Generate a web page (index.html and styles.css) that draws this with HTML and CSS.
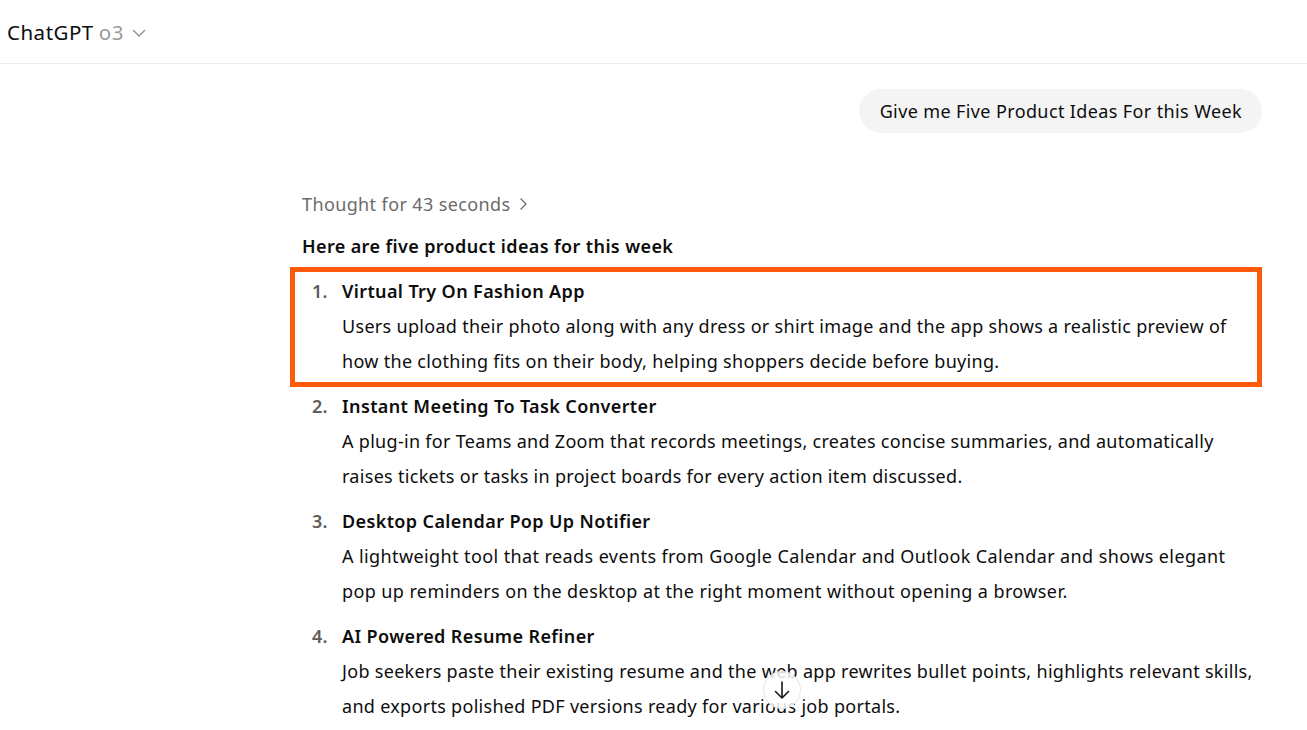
FILE: index.html
```html
<!DOCTYPE html>
<html lang="en">
<head>
<meta charset="utf-8">
<title>ChatGPT</title>
<link rel="stylesheet" href="styles.css">
</head>
<body>
<header class="topbar">
  <div class="model-switch">
    <span class="brand">ChatGPT</span>
    <span class="model">o3</span>
    <svg class="chev-down" width="16" height="16" viewBox="0 0 16 16" fill="none" stroke="#8f8f8f" stroke-width="1.4" stroke-linecap="round" stroke-linejoin="round"><path d="M2.5 5.5l5.5 5.5 5.5-5.5"/></svg>
  </div>
</header>
<main class="thread">
  <div class="user-row">
    <div class="bubble">Give me Five Product Ideas For this Week</div>
  </div>
  <div class="answer">
    <div class="thought">Thought for 43 seconds
      <svg class="chev-right" width="12" height="16" viewBox="0 0 12 16" fill="none" stroke="#6b6b6b" stroke-width="1.3" stroke-linecap="round" stroke-linejoin="round"><path d="M4 3l5 5-5 5"/></svg>
    </div>
    <p class="intro">Here are five product ideas for this week</p>
    <ol class="ideas">
      <li class="idea highlight">
        <span class="num">1.</span>
        <div class="body">
          <div class="title">Virtual Try On Fashion App</div>
          <div class="desc">Users upload their photo along with any dress or shirt image and the app shows a realistic preview of how the clothing fits on their body, helping shoppers decide before buying.</div>
        </div>
      </li>
      <li class="idea">
        <span class="num">2.</span>
        <div class="body">
          <div class="title">Instant Meeting To Task Converter</div>
          <div class="desc">A plug-in for Teams and Zoom that records meetings, creates concise summaries, and automatically raises tickets or tasks in project boards for every action item discussed.</div>
        </div>
      </li>
      <li class="idea">
        <span class="num">3.</span>
        <div class="body">
          <div class="title">Desktop Calendar Pop Up Notifier</div>
          <div class="desc desc-wide">A lightweight tool that reads events from Google Calendar and Outlook Calendar and shows elegant pop up reminders on the desktop at the right moment without opening a browser.</div>
        </div>
      </li>
      <li class="idea">
        <span class="num">4.</span>
        <div class="body">
          <div class="title">AI Powered Resume Refiner</div>
          <div class="desc">Job seekers paste their existing resume and the web app rewrites bullet points, highlights relevant skills, and exports polished PDF versions ready for various job portals.</div>
        </div>
      </li>
    </ol>
  </div>
</main>
<button class="scroll-down" aria-label="Scroll down">
  <svg width="22" height="22" viewBox="0 0 22 22" fill="none" stroke="#1a1a1a" stroke-width="1.6" stroke-linecap="round" stroke-linejoin="round"><path d="M11 3v16M4.5 12.5L11 19l6.5-6.5"/></svg>
</button>
</body>
</html>
```
FILE: styles.css
```css
html, body {
  margin: 0;
  padding: 0;
  background: #ffffff;
  overflow: hidden;
}
body {
  font-family: "Noto Sans", "Open Sans", sans-serif;
  color: #0d0d0d;
  height: 730px;
  position: relative;
  letter-spacing: 0.3px;
}
.topbar {
  height: 64px;
  border-bottom: 1px solid #ececec;
  display: flex;
  align-items: center;
  padding-left: 7px;
  box-sizing: border-box;
}
.model-switch {
  display: flex;
  align-items: center;
  gap: 5px;
  font-size: 20.5px;
  letter-spacing: 0.5px;
}
.brand { color: #0d0d0d; }
.model { color: #9a9a9a; }
.chev-down { margin-left: 2px; margin-top: 2px; }
.thread {
  width: 960px;
  margin-left: 302px;
  padding-top: 25px;
}
.user-row {
  display: flex;
  justify-content: flex-end;
}
.bubble {
  background: #f4f4f4;
  border-radius: 22px;
  height: 44px;
  box-sizing: border-box;
  padding: 0 20px 0 21px;
  display: flex;
  align-items: center;
  font-size: 18px;
  letter-spacing: 0.38px;
  color: #0d0d0d;
}
.answer {
  padding-top: 55px;
  font-size: 18px;
}
.thought {
  color: #6b6b6b;
  display: flex;
  align-items: center;
  gap: 7px;
  line-height: 32px;
  letter-spacing: 0.38px;
}
.chev-right { margin-top: -1px; }
.intro {
  margin: 10px 0 0;
  font-weight: 600;
  line-height: 32px;
  letter-spacing: 0.38px;
}
.ideas {
  list-style: none;
  margin: 5px 0 0;
  padding: 0;
}
.idea {
  display: flex;
  margin-left: -12px;
  padding: 2px 0 0 17px;
  border: 5px solid transparent;
}
.idea + .idea { margin-top: -5px; }
.idea.highlight {
  border-color: #ff5a0a;
}
.num {
  width: 30px;
  flex: none;
  font-weight: 600;
  color: #5d5d5d;
  line-height: 35px;
}
.body {
  flex: 1;
  margin-right: -5px;
}
.title {
  font-weight: 600;
  line-height: 35px;
  letter-spacing: 0.38px;
}
.desc {
  line-height: 35px;
  padding-bottom: 3px;
}
.desc-wide { letter-spacing: 0.4px; }
.scroll-down {
  position: absolute;
  left: 763px;
  top: 671px;
  width: 38px;
  height: 38px;
  border-radius: 50%;
  border: 1px solid #e6e6e6;
  background: rgba(255,255,255,0.85);
  display: flex;
  align-items: center;
  justify-content: center;
  padding: 0;
}
```
